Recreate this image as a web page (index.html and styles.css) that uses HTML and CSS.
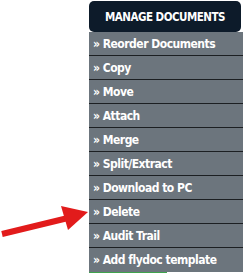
FILE: index.html
```html
<!DOCTYPE html>
<html>
<head>
<meta charset="utf-8">
<link rel="stylesheet" href="styles.css">
</head>
<body>
<div class="page">
  <div class="menu">
    <div class="menu-head">MANAGE DOCUMENTS</div>
    <ul class="menu-list">
      <li class="item">» Reorder Documents</li>
      <li class="item">» Copy</li>
      <li class="item">» Move</li>
      <li class="item">» Attach</li>
      <li class="item">» Merge</li>
      <li class="item">» Split/Extract</li>
      <li class="item">» Download to PC</li>
      <li class="item">» Delete</li>
      <li class="item">» Audit Trail</li>
      <li class="item">» Add flydoc template</li>
    </ul>
    <div class="menu-foot"><span class="foot-green"></span></div>
  </div>
  <svg class="arrow" width="92" height="40" viewBox="0 0 92 40">
    <line x1="2" y1="34" x2="68" y2="18" stroke="#e21b1b" stroke-width="6"/>
    <polygon points="88,12 61,6 68,30" fill="#e21b1b"/>
  </svg>
</div>
</body>
</html>
```
FILE: styles.css
```css
html, body {
  margin: 0;
  padding: 0;
  background: #fff;
}
.page {
  position: relative;
  width: 243px;
  height: 273px;
  overflow: hidden;
}
.menu {
  margin-left: 89px;
  padding-top: 1px;
  display: flex;
  flex-direction: column;
  width: 154px;
}
.menu-head {
  width: 152px;
  height: 31px;
  background: #0d1b2a;
  border-radius: 5px;
  color: #fff;
  font-family: "DejaVu Sans Condensed", "DejaVu Sans", sans-serif;
  font-weight: bold;
  font-size: 11.5px;
  letter-spacing: -0.5px;
  display: flex;
  align-items: center;
  justify-content: center;
}
.menu-list {
  list-style: none;
  margin: 0;
  padding: 0;
  background: #6c757d;
}
.item {
  height: 23px;
  border-bottom: 1px solid #1c1f22;
  padding-left: 4px;
  display: flex;
  align-items: center;
  color: #fff;
  font-family: "DejaVu Sans Condensed", "DejaVu Sans", sans-serif;
  font-weight: bold;
  font-size: 12px;
  letter-spacing: -0.5px;
  white-space: nowrap;
}
.item:last-child {
  border-bottom: none;
  height: 24px;
}
.menu-foot {
  height: 2px;
  display: flex;
}
.foot-green {
  width: 78px;
  background: #3fa34d;
}
.arrow {
  position: absolute;
  left: 0;
  top: 200px;
}
```
